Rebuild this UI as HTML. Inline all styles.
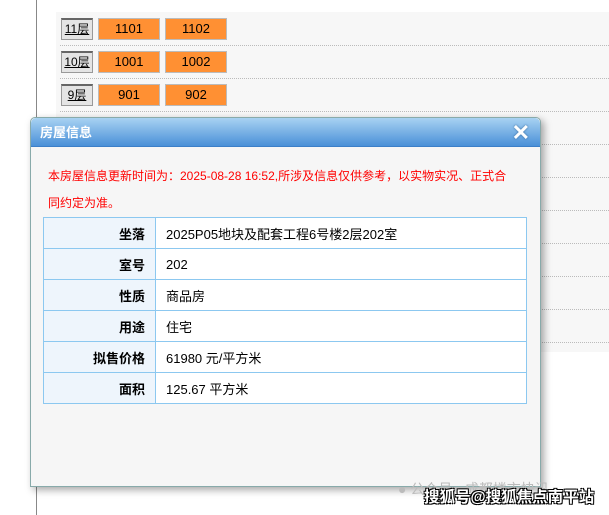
<!DOCTYPE html>
<html><head><meta charset="utf-8"><style>
body{margin:0;width:609px;height:515px;background:#fff;position:relative;overflow:hidden;font-family:"Liberation Sans","Noto Sans CJK SC",sans-serif}
.vl{position:absolute;left:36px;top:0;width:1px;height:515px;background:#888}
.bg{position:absolute;left:56px;top:12px;width:553px;height:340px;background:#f7f7f7}
.dot{position:absolute;left:60px;width:549px;border-top:1px dotted #bbb}
.fl{position:absolute;left:61px;width:30px;height:19px;background:#e4e4e4;border:1px solid #999;border-top:2px solid #666;font-size:12px;text-align:center;line-height:19px;text-decoration:underline;color:#000}
.u{position:absolute;width:60px;height:20px;background:#ff9033;border:1px solid #bbb;font-size:13px;text-align:center;line-height:20px}
.dlg{position:absolute;left:30px;top:117px;width:509px;height:368px;background:#f6f6f6;border:1px solid #8aa;border-radius:5px 5px 0 0;box-shadow:3px 3px 8px rgba(0,0,0,.35)}
.hd{height:28px;background:linear-gradient(#a8d2f2,#4a90d8);border-bottom:1px solid #3c7fc8;border-radius:5px 5px 0 0;color:#fff;font-size:13px;font-weight:bold;line-height:30px;padding-left:9px}
.x{position:absolute;right:10px;top:2px;color:#fff;font-size:22px;font-weight:bold;line-height:26px;text-shadow:0 0 2px #369}
.msg{position:absolute;left:17px;top:45px;width:472px;color:#f00;font-size:12px;line-height:27px}
table{position:absolute;left:12px;top:99px;width:484px;border-collapse:collapse;font-size:13px}
td{border:1px solid #8cc8f0;height:30px;padding:0 10px}
td.l{width:91px;text-align:right;font-weight:bold;background:#eef5fc}
td.v{background:#fff}
.wm{position:absolute;left:424px;top:485px;font-size:15.5px;white-space:nowrap;font-weight:bold;color:#fff;text-shadow:1px 1px 0 #000,-1px -1px 0 #000,1px -1px 0 #000,-1px 1px 0 #000}
.wm2{position:absolute;left:398px;top:479px;font-size:14px;white-space:nowrap;color:#bbb}
</style></head><body>
<div class="vl"></div><div class="bg"></div>
<div class="dot" style="top:45px"></div><div class="dot" style="top:78px"></div><div class="dot" style="top:111px"></div>
<div class="dot" style="top:144px"></div><div class="dot" style="top:177px"></div><div class="dot" style="top:210px"></div>
<div class="dot" style="top:243px"></div><div class="dot" style="top:276px"></div><div class="dot" style="top:309px"></div><div class="dot" style="top:342px"></div>
<div class="fl" style="top:18px">11层</div><div class="u" style="left:98px;top:18px">1101</div><div class="u" style="left:165px;top:18px">1102</div>
<div class="fl" style="top:51px">10层</div><div class="u" style="left:98px;top:51px">1001</div><div class="u" style="left:165px;top:51px">1002</div>
<div class="fl" style="top:84px">9层</div><div class="u" style="left:98px;top:84px">901</div><div class="u" style="left:165px;top:84px">902</div>
<div class="dlg"><div class="hd">房屋信息</div><div class="x">✕</div>
<div class="msg">本房屋信息更新时间为：2025-08-28 16:52,所涉及信息仅供参考，以实物实况、正式合<br>同约定为准。</div>
<table>
<tr><td class="l">坐落</td><td class="v">2025P05地块及配套工程6号楼2层202室</td></tr>
<tr><td class="l">室号</td><td class="v">202</td></tr>
<tr><td class="l">性质</td><td class="v">商品房</td></tr>
<tr><td class="l">用途</td><td class="v">住宅</td></tr>
<tr><td class="l">拟售价格</td><td class="v">61980 元/平方米</td></tr>
<tr><td class="l">面积</td><td class="v">125.67 平方米</td></tr>
</table></div>
<div class="wm2">● 公众号 · 成都楼市快讯</div>
<div class="wm">搜狐号@搜狐焦点南平站</div>
</body></html>
